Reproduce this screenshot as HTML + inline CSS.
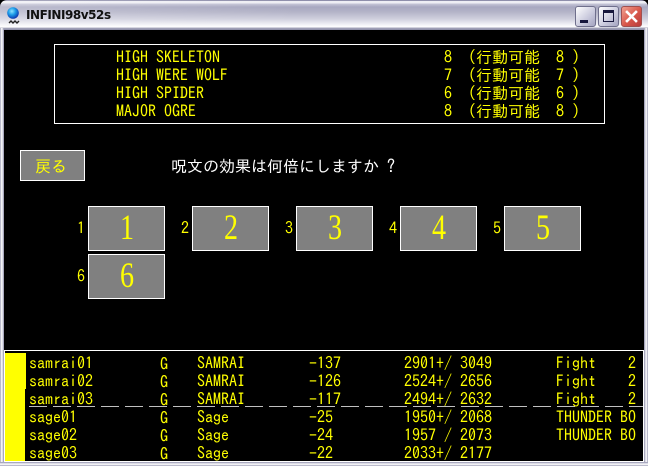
<!DOCTYPE html>
<html><head><meta charset="utf-8">
<style>
html,body{margin:0;padding:0;background:#000;width:648px;height:466px;overflow:hidden}
#w{position:relative;width:648px;height:466px;overflow:hidden;background:#000}
.t{position:absolute;font:16px/18px "IPAGothic","Liberation Mono",monospace;color:#ff0;white-space:pre;height:18px}
.b{position:absolute;box-sizing:border-box;background:#808080;border:1px solid #fff}
.d{position:absolute;box-sizing:border-box;width:77px;height:45px;background:#808080;border:1px solid #fff;color:#ff0;font:36px/41px "Liberation Serif",serif;text-align:center}
.d span{display:inline-block;transform:scaleX(.78)}
.l{position:absolute}
</style></head><body>
<div id="w">
<!-- frame -->
<div class="l" style="left:0;top:0;width:648px;height:30px;border-radius:7px 7px 0 0;background:linear-gradient(#8f8fab 0,#8f8fab 1px,#eeeef4 1px,#eeeef4 3px,#c4c4d6 4px,#a8a8c0 7px,#b4b4c8 12px,#d0d0de 19px,#f4f4f8 25px,#fff 27px,#a5a5bb 28px,#8d8da8 30px)"></div>
<div class="l" style="left:0;top:0;width:300px;height:28px;border-radius:7px 0 0 0;background:linear-gradient(90deg,rgba(255,255,255,.22),rgba(255,255,255,0))"></div>
<div class="l" style="left:0;top:28px;width:4px;height:438px;background:linear-gradient(90deg,#9c9cb5,#fff 40%,#d0d0de 70%,#8d8da8)"></div>
<div class="l" style="left:644px;top:28px;width:4px;height:438px;background:linear-gradient(90deg,#8d8da8,#d0d0de 30%,#fff 60%,#9c9cb5)"></div>
<div class="l" style="left:0;top:462px;width:648px;height:4px;background:linear-gradient(#8d8da8,#d0d0de 30%,#fff 60%,#9c9cb5)"></div>
<div class="l" style="left:4px;top:30px;width:640px;height:432px;background:#000"></div>

<!-- title icon -->
<svg class="l" style="left:6px;top:6px" width="16" height="19" viewBox="0 0 16 19">
<defs><radialGradient id="g" cx=".4" cy=".35" r=".7"><stop offset="0" stop-color="#8fe4ff"/><stop offset=".45" stop-color="#1c9ce8"/><stop offset="1" stop-color="#0a2aa8"/></radialGradient></defs>
<circle cx="7" cy="7" r="5.8" fill="url(#g)"/>
<path d="M3 17l2-2 2 2 2-2 2 2 2-2" fill="none" stroke="#222" stroke-width="1.4"/>
</svg>
<div class="l" style="left:26px;top:8px;font:bold 12px/15px 'DejaVu Sans','Liberation Sans',sans-serif;color:#111;white-space:pre;letter-spacing:-.45px">INFINI98v52s</div>

<!-- window buttons -->
<div class="l" style="left:575px;top:6px;width:21px;height:21px;box-sizing:border-box;border:1px solid #6f6f8c;border-radius:3px;background:linear-gradient(135deg,#fff,#c8c8dc 60%,#a4a4c0)"><div class="l" style="left:4px;top:13px;width:8px;height:3px;background:#16163c"></div></div>
<div class="l" style="left:598px;top:6px;width:21px;height:21px;box-sizing:border-box;border:1px solid #6f6f8c;border-radius:3px;background:linear-gradient(135deg,#fff,#c8c8dc 60%,#a4a4c0)"><div class="l" style="left:4px;top:3px;width:11px;height:12px;box-sizing:border-box;border:1px solid #16163c;border-top-width:3px"></div></div>
<div class="l" style="left:621px;top:6px;width:21px;height:21px;box-sizing:border-box;border:1px solid #a05050;border-radius:3px;background:linear-gradient(135deg,#f0a090,#d8564a 55%,#b83c3c)">
<svg class="l" style="left:3px;top:3px" width="13" height="13" viewBox="0 0 13 13"><path d="M2 2l9 9M11 2l-9 9" stroke="#fff" stroke-width="2.6" fill="none" stroke-linecap="square"/></svg></div>

<!-- top box -->
<div class="l" style="left:54px;top:44px;width:551px;height:80px;box-sizing:border-box;border:1px solid #fff"></div>
<div class="t" style="left:116px;top:48px">HIGH SKELETON</div>
<div class="t" style="left:116px;top:66px">HIGH WERE WOLF</div>
<div class="t" style="left:116px;top:84px">HIGH SPIDER</div>
<div class="t" style="left:116px;top:102px">MAJOR OGRE</div>
<div class="t" style="left:444px;top:48px">8  (行動可能  8 )</div>
<div class="t" style="left:444px;top:66px">7  (行動可能  7 )</div>
<div class="t" style="left:444px;top:84px">6  (行動可能  6 )</div>
<div class="t" style="left:444px;top:102px">8  (行動可能  8 )</div>

<!-- back + prompt -->
<div class="b" style="left:20px;top:150px;width:65px;height:31px"></div>
<div class="t" style="left:35px;top:157px">戻る</div>
<div class="t" style="left:171px;top:157px;color:#fff">呪文の効果は何倍にしますか ?</div>

<!-- choices -->
<div class="d" style="left:88px;top:206px"><span>1</span></div>
<div class="d" style="left:192px;top:206px"><span>2</span></div>
<div class="d" style="left:296px;top:206px"><span>3</span></div>
<div class="d" style="left:400px;top:206px"><span>4</span></div>
<div class="d" style="left:504px;top:206px"><span>5</span></div>
<div class="d" style="left:88px;top:254px"><span>6</span></div>
<div class="t" style="left:77px;top:219px">1</div>
<div class="t" style="left:181px;top:219px">2</div>
<div class="t" style="left:285px;top:219px">3</div>
<div class="t" style="left:389px;top:219px">4</div>
<div class="t" style="left:493px;top:219px">5</div>
<div class="t" style="left:77px;top:267px">6</div>

<!-- party panel -->
<div class="l" style="left:4px;top:350px;width:640px;height:112px;box-sizing:border-box;border:1px solid #fff"></div>
<div class="l" style="left:5px;top:353px;width:21px;height:36px;background:#ff0"></div>
<div class="l" style="left:5px;top:389px;width:20px;height:72px;background:#ff0"></div>

<div class="t" style="left:29px;top:354px">samrai01</div>
<div class="t" style="left:29px;top:372px">samrai02</div>
<div class="t" style="left:29px;top:390px">samrai03</div>
<div class="t" style="left:29px;top:408px">sage01</div>
<div class="t" style="left:29px;top:426px">sage02</div>
<div class="t" style="left:29px;top:444px">sage03</div>

<div class="t" style="left:160px;top:355px">G</div>
<div class="t" style="left:160px;top:373px">G</div>
<div class="t" style="left:160px;top:391px">G</div>
<div class="t" style="left:160px;top:409px">G</div>
<div class="t" style="left:160px;top:427px">G</div>
<div class="t" style="left:160px;top:445px">G</div>

<div class="t" style="left:197px;top:354px">SAMRAI</div>
<div class="t" style="left:197px;top:372px">SAMRAI</div>
<div class="t" style="left:197px;top:390px">SAMRAI</div>
<div class="t" style="left:197px;top:408px">Sage</div>
<div class="t" style="left:197px;top:426px">Sage</div>
<div class="t" style="left:197px;top:444px">Sage</div>

<div class="t" style="left:309px;top:354px">-137</div>
<div class="t" style="left:309px;top:372px">-126</div>
<div class="t" style="left:309px;top:390px">-117</div>
<div class="t" style="left:309px;top:408px">-25</div>
<div class="t" style="left:309px;top:426px">-24</div>
<div class="t" style="left:309px;top:444px">-22</div>

<div class="t" style="left:404px;top:354px">2901+/ 3049</div>
<div class="t" style="left:404px;top:372px">2524+/ 2656</div>
<div class="t" style="left:404px;top:390px">2494+/ 2632</div>
<div class="t" style="left:404px;top:408px">1950+/ 2068</div>
<div class="t" style="left:404px;top:426px">1957 / 2073</div>
<div class="t" style="left:404px;top:444px">2033+/ 2177</div>

<div class="t" style="left:556px;top:354px">Fight</div>
<div class="t" style="left:556px;top:372px">Fight</div>
<div class="t" style="left:556px;top:390px">Fight</div>
<div class="t" style="left:556px;top:408px">THUNDER BO</div>
<div class="t" style="left:556px;top:426px">THUNDER BO</div>
<div class="t" style="left:628px;top:354px">2</div>
<div class="t" style="left:628px;top:372px">2</div>
<div class="t" style="left:628px;top:390px">2</div>

<!-- dashed separator -->
<div class="l" style="left:29px;top:406px;width:614px;height:1px;background:repeating-linear-gradient(90deg,#c0c0c0 0,#c0c0c0 18px,transparent 18px,transparent 24px)"></div>
</div>
</body></html>
